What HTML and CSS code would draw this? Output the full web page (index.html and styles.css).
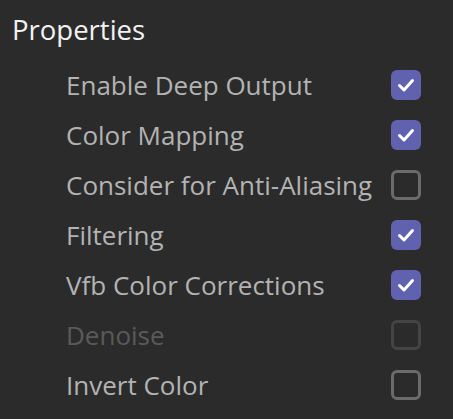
FILE: index.html
```html
<!DOCTYPE html>
<html lang="en">
<head>
  <meta charset="UTF-8">
  <title>Properties</title>
  <link rel="stylesheet" href="styles.css">
</head>
<body>
  <h1 class="title">Properties</h1>

  <div class="props">
    <label class="row"><span class="name">Enable Deep Output</span><span class="box on"><svg viewBox="0 0 30 30"><path d="M8.5 15.5 L13 20 L21.5 10.5"/></svg></span></label>
    <label class="row"><span class="name">Color Mapping</span><span class="box on"><svg viewBox="0 0 30 30"><path d="M8.5 15.5 L13 20 L21.5 10.5"/></svg></span></label>
    <label class="row"><span class="name">Consider for Anti-Aliasing</span><span class="box"></span></label>
    <label class="row"><span class="name">Filtering</span><span class="box on"><svg viewBox="0 0 30 30"><path d="M8.5 15.5 L13 20 L21.5 10.5"/></svg></span></label>
    <label class="row"><span class="name">Vfb Color Corrections</span><span class="box on"><svg viewBox="0 0 30 30"><path d="M8.5 15.5 L13 20 L21.5 10.5"/></svg></span></label>
    <label class="row disabled"><span class="name">Denoise</span><span class="box"></span></label>
    <label class="row"><span class="name">Invert Color</span><span class="box"></span></label>
  </div>
</body>
</html>
```

FILE: styles.css
```css
body {
  margin: 0;
  background-color: #2b2b2b;
  font-family: "Open Sans", sans-serif;
  color: #b3b3b3;
}
.title {
  margin: 0;
  padding: 12px 0 0 12px;
  font-size: 27.5px;
  font-weight: normal;
  line-height: 36px;
  color: #f2f2f2;
}
.props {
  padding: 12px 32px 0 66px;
}
.row {
  display: flex;
  align-items: center;
  justify-content: space-between;
  height: 50px;
  font-size: 26px;
}
.box {
  width: 30px;
  height: 30px;
  box-sizing: border-box;
  border: 3px solid #6b6b6b;
  border-radius: 6px;
}
.box.on {
  border: none;
  background-color: #6062b0;
}
.box svg {
  display: block;
  width: 30px;
  height: 30px;
}
.box path {
  fill: none;
  stroke: #ffffff;
  stroke-width: 3;
  stroke-linecap: round;
  stroke-linejoin: round;
}
.disabled .name {
  color: #5a5a5a;
}
.disabled .box {
  border-color: #444444;
}
```
